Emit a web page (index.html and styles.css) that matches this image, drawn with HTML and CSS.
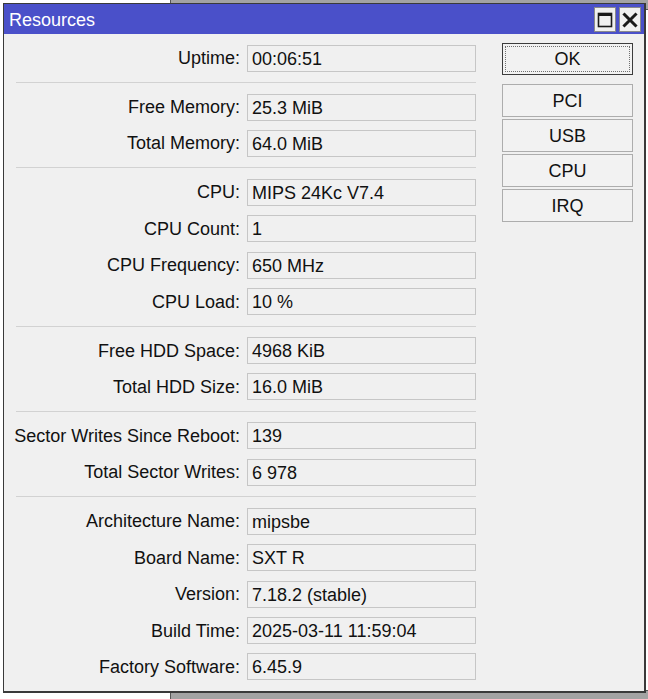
FILE: index.html
```html
<!DOCTYPE html>
<html>
<head>
<meta charset="utf-8">
<link rel="stylesheet" href="styles.css">
</head>
<body>
<div class="desk">
  <div class="back back-top"></div>
  <div class="back back-bottom"></div>
  <div class="win">
    <div class="titlebar">
      <span class="title">Resources</span>
      <div class="tbtns">
        <span class="tbtn"><svg width="16" height="16" viewBox="0 0 16 16"><rect x="1.5" y="1.5" width="13" height="13" fill="none" stroke="#1a1a1a" stroke-width="1.6"/><rect x="1" y="1" width="14" height="3" fill="#1a1a1a"/></svg></span>
        <span class="tbtn"><svg width="16" height="16" viewBox="0 0 16 16"><path d="M2.5 2.5 L13.5 13.5 M13.5 2.5 L2.5 13.5" stroke="#1a1a1a" stroke-width="3" stroke-linecap="square"/></svg></span>
      </div>
    </div>
    <div class="client">
      <div class="form">
        <div class="group">
          <div class="row"><span class="lbl">Uptime:</span><div class="field">00:06:51</div></div>
        </div>
        <div class="sep"></div>
        <div class="group">
          <div class="row"><span class="lbl">Free Memory:</span><div class="field">25.3 MiB</div></div>
          <div class="row"><span class="lbl">Total Memory:</span><div class="field">64.0 MiB</div></div>
        </div>
        <div class="sep"></div>
        <div class="group">
          <div class="row"><span class="lbl">CPU:</span><div class="field">MIPS 24Kc V7.4</div></div>
          <div class="row"><span class="lbl">CPU Count:</span><div class="field">1</div></div>
          <div class="row"><span class="lbl">CPU Frequency:</span><div class="field">650 MHz</div></div>
          <div class="row"><span class="lbl">CPU Load:</span><div class="field">10 %</div></div>
        </div>
        <div class="sep"></div>
        <div class="group">
          <div class="row"><span class="lbl">Free HDD Space:</span><div class="field">4968 KiB</div></div>
          <div class="row"><span class="lbl">Total HDD Size:</span><div class="field">16.0 MiB</div></div>
        </div>
        <div class="sep"></div>
        <div class="group">
          <div class="row"><span class="lbl">Sector Writes Since Reboot:</span><div class="field">139</div></div>
          <div class="row"><span class="lbl">Total Sector Writes:</span><div class="field">6 978</div></div>
        </div>
        <div class="sep"></div>
        <div class="group">
          <div class="row"><span class="lbl">Architecture Name:</span><div class="field">mipsbe</div></div>
          <div class="row"><span class="lbl">Board Name:</span><div class="field">SXT R</div></div>
          <div class="row"><span class="lbl">Version:</span><div class="field">7.18.2 (stable)</div></div>
          <div class="row"><span class="lbl">Build Time:</span><div class="field">2025-03-11 11:59:04</div></div>
          <div class="row"><span class="lbl">Factory Software:</span><div class="field">6.45.9</div></div>
        </div>
      </div>
      <div class="buttons">
        <div class="btn btn-ok"><span class="focus">OK</span></div>
        <div class="btn-list">
          <div class="btn">PCI</div>
          <div class="btn">USB</div>
          <div class="btn">CPU</div>
          <div class="btn">IRQ</div>
        </div>
      </div>
    </div>
  </div>
</div>
</body>
</html>
```
FILE: styles.css
```css
html, body {
  margin: 0;
  padding: 0;
  background: #ffffff;
}
.desk {
  position: relative;
  width: 648px;
  height: 699px;
  overflow: hidden;
  font-family: "Liberation Sans", Arial, sans-serif;
  font-size: 18px;
  color: #111;
}
.back {
  position: absolute;
  background: #a3a3a3;
}
.back-top {
  left: 170px;
  top: -2px;
  width: 490px;
  height: 10px;
  border: 1px solid #555;
}
.back-bottom {
  left: 170px;
  top: 690px;
  width: 490px;
  height: 20px;
  border: 1px solid #555;
}
.win {
  position: absolute;
  left: 3px;
  top: 3px;
  width: 643px;
  height: 690px;
  box-sizing: border-box;
  border: 1px solid #3a3a3a;
  border-right-width: 2px;
  border-bottom-width: 2px;
  background: #f0f0f0;
  display: flex;
  flex-direction: column;
}
.titlebar {
  height: 30px;
  background: #4a50c9;
  display: flex;
  align-items: center;
  justify-content: space-between;
  padding-left: 5px;
  padding-right: 3px;
}
.title {
  color: #ffffff;
  font-size: 18px;
  padding-top: 2px;
}
.tbtns {
  display: flex;
  gap: 3px;
  align-self: flex-start;
  margin-top: 3px;
}
.tbtn {
  width: 22px;
  height: 25px;
  box-sizing: border-box;
  background: #f0f0f0;
  border: 1px solid #8a8a8a;
  display: flex;
  align-items: center;
  justify-content: center;
}
.client {
  display: flex;
  padding-top: 10.5px;
}
.form {
  width: 472px;
  display: flex;
  flex-direction: column;
}
.group {
  display: flex;
  flex-direction: column;
  gap: 9.4px;
}
.row {
  display: flex;
  align-items: center;
  gap: 7px;
}
.lbl {
  width: 236px;
  text-align: right;
  white-space: nowrap;
  padding-top: 1px;
}
.field {
  width: 229px;
  height: 27px;
  box-sizing: border-box;
  border: 1px solid #c6c6c6;
  padding-left: 4px;
  padding-top: 1px;
  line-height: 24px;
  white-space: nowrap;
}
.sep {
  height: 1px;
  background: #d2d2d2;
  margin: 10.5px 0 10.5px 12px;
}
.buttons {
  margin-left: 26px;
  margin-top: -1.5px;
  width: 131px;
  display: flex;
  flex-direction: column;
  gap: 9px;
}
.btn-list {
  display: flex;
  flex-direction: column;
  gap: 2px;
}
.btn {
  height: 33px;
  box-sizing: border-box;
  border: 1px solid #adadad;
  background: #f2f2f2;
  display: flex;
  align-items: center;
  justify-content: center;
  padding-top: 1px;
}
.btn-ok {
  height: 32px;
  border: 1px solid #3c3c3c;
  padding: 2px;
}
.focus {
  flex: 1;
  align-self: stretch;
  border: 1px dotted #707070;
  display: flex;
  align-items: center;
  justify-content: center;
  padding-top: 1px;
}
```
